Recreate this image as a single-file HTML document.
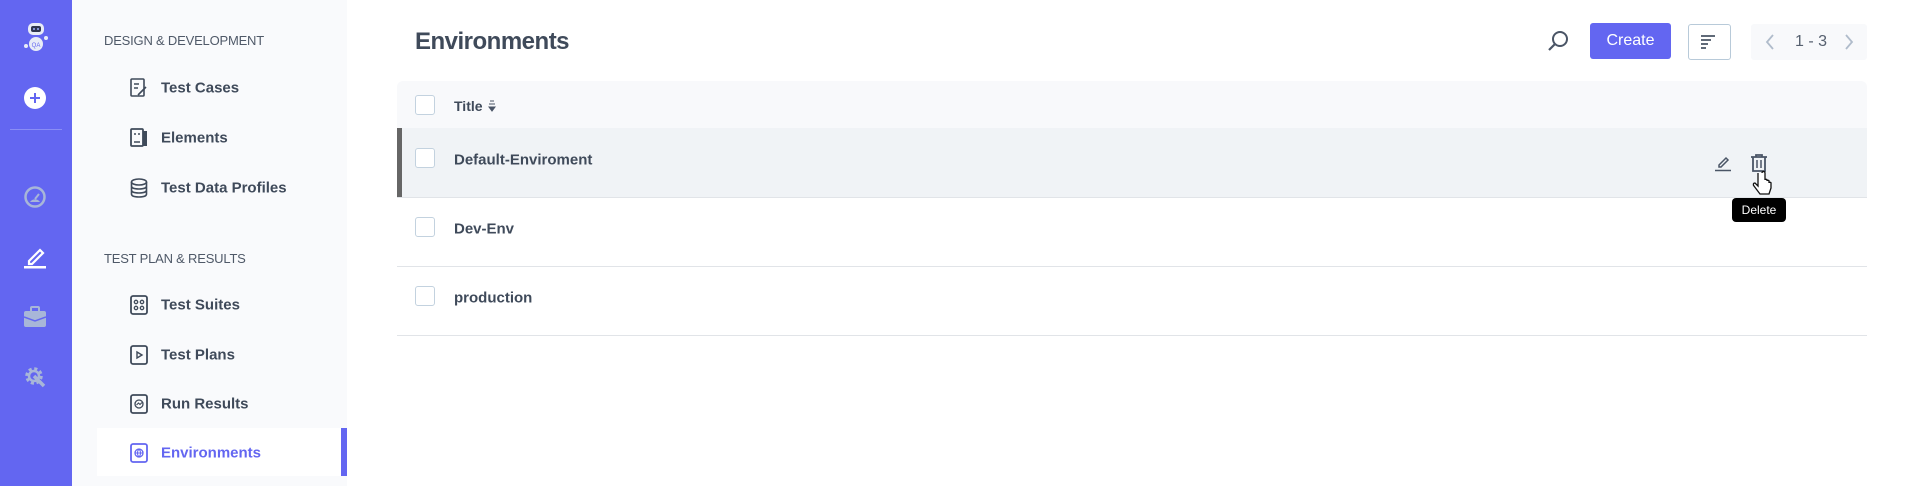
<!DOCTYPE html>
<html><head><meta charset="utf-8"><style>
*{margin:0;padding:0;box-sizing:border-box}
body{width:1917px;height:486px;overflow:hidden;background:#fff;font-family:"Liberation Sans",sans-serif;position:relative;color:#3f4a5a}
.abs{position:absolute}
.side{left:0;top:0;width:72px;height:486px;background:#6366f1}
.panel{left:72px;top:0;width:275px;height:486px;background:#f9fafc}
.h{left:104px;font-size:13px;color:#4f5968;letter-spacing:-0.2px}
.it{left:161px;font-size:15px;font-weight:bold;color:#3f4a5a;transform:translateY(-50%)}
.ic{left:130px;width:18px;height:20px;transform:translateY(-50%)}
.cb{left:415px;width:20px;height:20px;border:1.5px solid #c3d2df;border-radius:3px;background:#fff}
.rt{left:454px;font-size:15px;font-weight:bold;color:#3f4a5a;transform:translateY(-50%)}
</style></head><body>
<div class="abs side"></div>
<svg class="abs" style="left:22px;top:20px" width="28" height="34" viewBox="0 0 28 34"><rect x="6" y="3" width="16" height="12" rx="5" fill="#e8ecf7"/><rect x="9" y="6" width="10" height="6" rx="2" fill="#2f3650"/><circle cx="12" cy="9" r="1" fill="#9fb0ff"/><circle cx="16" cy="9" r="1" fill="#9fb0ff"/><ellipse cx="14" cy="24" rx="7" ry="7" fill="#e8ecf7"/><text x="14" y="27" font-size="6" text-anchor="middle" fill="#6366f1" font-family="Liberation Sans">QA</text><circle cx="4" cy="26" r="2" fill="#e8ecf7"/><circle cx="24" cy="18" r="2" fill="#e8ecf7"/></svg>
<svg class="abs" style="left:24px;top:87px" width="22" height="22"><circle cx="11" cy="11" r="11" fill="#fff"/><path d="M11 6v10M6 11h10" stroke="#6366f1" stroke-width="2"/></svg>
<div class="abs" style="left:10px;top:129px;width:52px;height:1px;background:#8a8ef5"></div>
<svg class="abs" style="left:24px;top:186px" width="22" height="22"><circle cx="11" cy="11" r="9.5" fill="none" stroke="#a8b6d8" stroke-width="2.5"/><path d="M6 16a6 6 0 0 1 10 0z" fill="#a8b6d8"/><path d="M11 13l4-5" stroke="#a8b6d8" stroke-width="2"/></svg>
<svg class="abs" style="left:24px;top:245px" width="22" height="24"><path d="M5 16l11-11 3 3-11 11H5z" fill="none" stroke="#fff" stroke-width="2.2"/><rect x="0" y="21" width="22" height="2.5" fill="#fff"/></svg>
<svg class="abs" style="left:24px;top:306px" width="22" height="22"><rect x="7" y="1" width="8" height="5" rx="1" fill="none" stroke="#a8b6d8" stroke-width="2"/><rect x="0" y="5" width="22" height="16" rx="2" fill="#a8b6d8"/><path d="M0 11l11 4 11-4" stroke="#6366f1" stroke-width="1.5" fill="none"/></svg>
<svg class="abs" style="left:24px;top:366px" width="22" height="22"><circle cx="10" cy="10" r="7" fill="none" stroke="#a8b6d8" stroke-width="3.5" stroke-dasharray="3 2.5"/><circle cx="10" cy="10" r="5" fill="none" stroke="#a8b6d8" stroke-width="2.5"/><path d="M10 10l10 10" stroke="#a8b6d8" stroke-width="3.5"/></svg>

<div class="abs panel"></div>
<div class="abs h" style="top:33px">DESIGN &amp; DEVELOPMENT</div>
<div class="abs h" style="top:251px">TEST PLAN &amp; RESULTS</div>
<svg class="abs ic" style="top:88px" viewBox="0 0 18 20"><rect x="1" y="1" width="13" height="17" rx="1" fill="none" stroke="#3f4a5a" stroke-width="1.6"/><path d="M4 6h5M4 10h4M8 17l8-8" stroke="#3f4a5a" stroke-width="1.6"/></svg>
<div class="abs it" style="top:88px">Test Cases</div>
<svg class="abs ic" style="top:138px" viewBox="0 0 18 20"><rect x="1" y="1" width="12" height="17" rx="1" fill="none" stroke="#3f4a5a" stroke-width="1.8"/><rect x="13" y="3" width="4" height="15" fill="#3f4a5a"/><path d="M4 6h2M8 6h2M4 14h6" stroke="#3f4a5a" stroke-width="1.6"/></svg>
<div class="abs it" style="top:138px">Elements</div>
<svg class="abs ic" style="top:188px" viewBox="0 0 18 20"><ellipse cx="9" cy="4" rx="7.5" ry="3" fill="none" stroke="#3f4a5a" stroke-width="1.6"/><path d="M1.5 4v12c0 2 3 3 7.5 3s7.5-1 7.5-3V4M1.5 8c0 2 3 3 7.5 3s7.5-1 7.5-3M1.5 12c0 2 3 3 7.5 3s7.5-1 7.5-3" fill="none" stroke="#3f4a5a" stroke-width="1.6"/></svg>
<div class="abs it" style="top:188px">Test Data Profiles</div>
<svg class="abs ic" style="top:305px" viewBox="0 0 18 20"><rect x="1" y="1" width="16" height="18" rx="2" fill="none" stroke="#3f4a5a" stroke-width="1.8"/><circle cx="6" cy="7" r="1.7" fill="none" stroke="#3f4a5a" stroke-width="1.3"/><circle cx="12" cy="7" r="1.7" fill="none" stroke="#3f4a5a" stroke-width="1.3"/><circle cx="6" cy="13" r="1.7" fill="none" stroke="#3f4a5a" stroke-width="1.3"/><circle cx="12" cy="13" r="1.7" fill="none" stroke="#3f4a5a" stroke-width="1.3"/></svg>
<div class="abs it" style="top:305px">Test Suites</div>
<svg class="abs ic" style="top:355px" viewBox="0 0 18 20"><rect x="1" y="1" width="16" height="18" rx="2" fill="none" stroke="#3f4a5a" stroke-width="1.8"/><path d="M7 7l5 3-5 3z" fill="none" stroke="#3f4a5a" stroke-width="1.4"/></svg>
<div class="abs it" style="top:355px">Test Plans</div>
<svg class="abs ic" style="top:404px" viewBox="0 0 18 20"><rect x="1" y="1" width="16" height="18" rx="2" fill="none" stroke="#3f4a5a" stroke-width="1.8"/><circle cx="9" cy="10" r="4" fill="none" stroke="#3f4a5a" stroke-width="1.3"/><path d="M6.5 11l2-2 1.5 1.5 2-2" stroke="#3f4a5a" stroke-width="1.1" fill="none"/></svg>
<div class="abs it" style="top:404px">Run Results</div>
<div class="abs" style="left:97px;top:428px;width:250px;height:48px;background:#fff"></div>
<div class="abs" style="left:341px;top:428px;width:6px;height:48px;background:#6366f1"></div>
<svg class="abs ic" style="top:453px" viewBox="0 0 18 20"><rect x="1" y="1" width="16" height="18" rx="2" fill="none" stroke="#6366f1" stroke-width="1.8"/><circle cx="9" cy="10" r="4" fill="none" stroke="#6366f1" stroke-width="1.3"/><path d="M5 10h8M9 6c-2 2-2 6 0 8M9 6c2 2 2 6 0 8" stroke="#6366f1" stroke-width="1" fill="none"/></svg>
<div class="abs it" style="top:453px;color:#6366f1">Environments</div>

<div class="abs" style="left:415px;top:28px;font-size:24px;font-weight:bold;color:#3f4a5a;letter-spacing:-0.5px">Environments</div>
<svg class="abs" style="left:1546px;top:29px" width="24" height="24"><circle cx="14" cy="10" r="7" fill="none" stroke="#4a5566" stroke-width="2"/><path d="M9 15l-6 6" stroke="#4a5566" stroke-width="2.2"/></svg>
<div class="abs" style="left:1590px;top:23px;width:81px;height:36px;background:#6366f1;border-radius:3px;color:#fff;font-size:16px;text-align:center;line-height:36px">Create</div>
<div class="abs" style="left:1688px;top:24px;width:43px;height:36px;border:1.5px solid #b8cad9;border-radius:3px;background:#fff"></div>
<svg class="abs" style="left:1700px;top:34px" width="16" height="16"><path d="M1 2h14M1 6h10M1 10h7M1 14h5" stroke="#4a5566" stroke-width="1.8"/></svg>
<div class="abs" style="left:1751px;top:24px;width:116px;height:36px;background:#f8f9fb;border-radius:3px"></div>
<svg class="abs" style="left:1764px;top:33px" width="12" height="18"><path d="M9 2L3 9l6 7" stroke="#b0bccb" stroke-width="1.8" fill="none"/></svg>
<div class="abs" style="left:1795px;top:33px;font-size:16px;color:#56606f">1 - 3</div>
<svg class="abs" style="left:1843px;top:33px" width="12" height="18"><path d="M3 2l6 7-6 7" stroke="#b0bccb" stroke-width="1.8" fill="none"/></svg>

<div class="abs" style="left:397px;top:81px;width:1470px;height:47px;background:#f8f9fb;border-radius:6px 6px 0 0"></div>
<div class="abs cb" style="top:95px"></div>
<div class="abs rt" style="top:106px;font-size:14px">Title</div>
<svg class="abs" style="left:488px;top:99px" width="8" height="14"><path d="M2 2h4M1 5h6M1 8h6l-3 4z" stroke="#4a5566" fill="#4a5566" stroke-width="1"/></svg>

<div class="abs" style="left:397px;top:128px;width:1470px;height:69px;background:#f0f3f6"></div>
<div class="abs" style="left:397px;top:128px;width:5px;height:69px;background:#666"></div>
<div class="abs" style="left:397px;top:197px;width:1470px;height:1px;background:#e1e4e8"></div>
<div class="abs cb" style="top:148px"></div>
<div class="abs rt" style="top:160px">Default-Enviroment</div>
<svg class="abs" style="left:1714px;top:154px" width="18" height="18"><path d="M5 11l7-7 2 2-7 7H5z" fill="none" stroke="#4a5566" stroke-width="1.5"/><path d="M1 16.5h16" stroke="#4a5566" stroke-width="1.5"/></svg>
<svg class="abs" style="left:1750px;top:154px" width="18" height="18"><path d="M1 3h16M6 3V1h6v2M3 3h12v14H3z" fill="none" stroke="#4a5566" stroke-width="1.8"/><path d="M7 6v8M11 6v8" stroke="#4a5566" stroke-width="1.5"/></svg>
<svg class="abs" style="left:1752px;top:170px" width="22" height="28"><path d="M6 3v13l-3-3c-2 0-2 2-1 3l6 8h9l2-6V13c0-1-2-1-2 0v-2c0-1-2-1-2 0v-1c0-1-2-1-2 0V3c0-2-3-2-3 0" fill="#fff" stroke="#111" stroke-width="1.3"/></svg>
<div class="abs" style="left:1732px;top:198px;width:54px;height:24px;background:#000;border-radius:4px;color:#fff;font-size:12px;text-align:center;line-height:24px">Delete</div>

<div class="abs cb" style="top:217px"></div>
<div class="abs rt" style="top:229px">Dev-Env</div>
<div class="abs" style="left:397px;top:266px;width:1470px;height:1px;background:#e1e4e8"></div>
<div class="abs cb" style="top:286px"></div>
<div class="abs rt" style="top:298px">production</div>
<div class="abs" style="left:397px;top:335px;width:1470px;height:1px;background:#e1e4e8"></div>
</body></html>
